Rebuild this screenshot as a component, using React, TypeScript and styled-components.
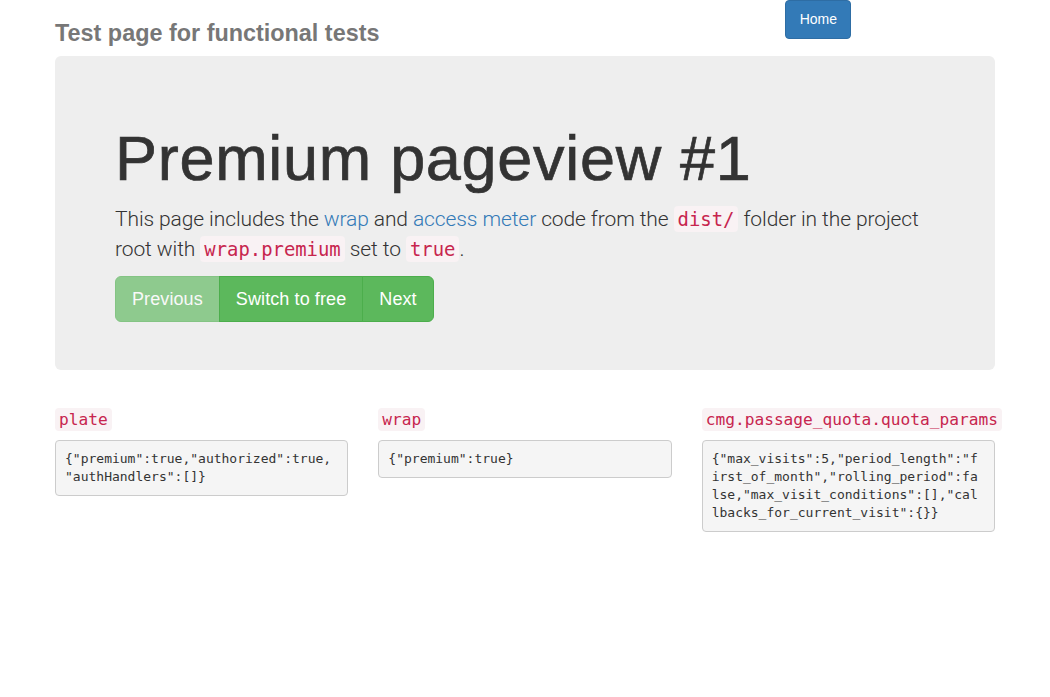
import React from "react";
import styled, { createGlobalStyle } from "styled-components";

const GlobalStyle = createGlobalStyle`
  html, body { margin: 0; padding: 0; background: #fff; }
  body {
    font-family: "Liberation Sans", Arial, sans-serif;
    font-size: 14px;
    line-height: 1.42857143;
    color: #333;
  }
  * { box-sizing: border-box; }
`;

const Container = styled.div`
  width: 970px;
  margin: 0 auto;
  padding: 0 15px;
`;

const Header = styled.div`
  display: flex;
  align-items: flex-start;
`;

const Title = styled.h3`
  margin: 20px 0 10px;
  font-size: 23.4px;
  line-height: 26.4px;
  font-weight: 700;
  color: #777;
`;

const HomeButton = styled.a`
  margin-left: auto;
  margin-right: 144px;
  display: inline-block;
  padding: 9px 13px 9px 14px;
  font-size: 14px;
  line-height: 19px;
  color: #fff;
  background: #337ab7;
  border: 1px solid #2e6da4;
  border-radius: 4px;
  text-decoration: none;
`;

const Jumbotron = styled.div`
  background: #eee;
  border-radius: 6px;
  padding: 48px 60px;
  margin-bottom: 30px;
`;

const BigTitle = styled.h1`
  margin: 20px 0 10px;
  font-size: 63px;
  line-height: 1.1;
  font-weight: 400;
  letter-spacing: 0.7px;
  -webkit-text-stroke: 0.7px #333;
  color: #333;
`;

const Lead = styled.p`
  margin: 0 0 12px;
  font-family: Roboto, "Liberation Sans", sans-serif;
  font-size: 21px;
  font-weight: 300;
  line-height: 30px;
  letter-spacing: -0.1px;
`;

const Link = styled.a`
  color: #337ab7;
  text-decoration: none;
`;

const Code = styled.code`
  font-family: "DejaVu Sans Mono", Menlo, monospace;
  font-size: 90%;
  font-weight: 400;
  letter-spacing: 0;
  padding: 2px 4px;
  color: #c7254e;
  background: #f9f2f4;
  border-radius: 4px;
`;

const BtnGroup = styled.div`
  display: inline-flex;
`;

const GroupButton = styled.a<{ $disabled?: boolean }>`
  display: inline-block;
  padding: 10px 16px;
  font-size: 18px;
  line-height: 24px;
  letter-spacing: 0.1px;
  color: #fff;
  background: #5cb85c;
  border: 1px solid #4cae4c;
  text-decoration: none;
  opacity: ${(p) => (p.$disabled ? 0.65 : 1)};
  & + & { margin-left: -1px; }
  &:first-child { border-radius: 6px 0 0 6px; }
  &:last-child { border-radius: 0 6px 6px 0; }
`;

const Columns = styled.div`
  display: grid;
  grid-template-columns: repeat(3, 1fr);
  column-gap: 30px;
`;

const Column = styled.div`
  min-width: 0;
`;

const ColHeading = styled.h4`
  margin: 10px 0;
  font-size: 18px;
  line-height: 1.1;
  font-weight: 500;
  white-space: nowrap;
`;

const Pre = styled.pre`
  margin: 0 0 10px;
  padding: 9px;
  font-family: "DejaVu Sans Mono", Menlo, monospace;
  font-size: 13px;
  line-height: 18px;
  color: #333;
  background: #f5f5f5;
  border: 1px solid #ccc;
  border-radius: 4px;
  white-space: pre-wrap;
  word-break: break-all;
  line-break: anywhere;
  overflow-wrap: anywhere;
`;

const panels = [
  { name: "plate", value: '{"premium":true,"authorized":true,"authHandlers":[]}' },
  { name: "wrap", value: '{"premium":true}' },
  {
    name: "cmg.passage_quota.quota_params",
    value:
      '{"max_visits":5,"period_length":"first_of_month","rolling_period":false,"max_visit_conditions":[],"callbacks_for_current_visit":{}}',
  },
];

export default function App() {
  return (
    <>
      <GlobalStyle />
      <Container>
        <Header>
          <Title>Test page for functional tests</Title>
          <HomeButton href="#">Home</HomeButton>
        </Header>
        <Jumbotron>
          <BigTitle>Premium pageview #1</BigTitle>
          <Lead>
            This page includes the <Link href="#">wrap</Link> and{" "}
            <Link href="#">access meter</Link> code from the <Code>dist/</Code> folder in the
            project root with <Code>wrap.premium</Code> set to <Code>true</Code>.
          </Lead>
          <BtnGroup>
            <GroupButton $disabled>Previous</GroupButton>
            <GroupButton href="#">Switch to free</GroupButton>
            <GroupButton href="#">Next</GroupButton>
          </BtnGroup>
        </Jumbotron>
        <Columns>
          {panels.map((p) => (
            <Column key={p.name}>
              <ColHeading>
                <Code>{p.name}</Code>
              </ColHeading>
              <Pre>{p.value}</Pre>
            </Column>
          ))}
        </Columns>
      </Container>
    </>
  );
}
